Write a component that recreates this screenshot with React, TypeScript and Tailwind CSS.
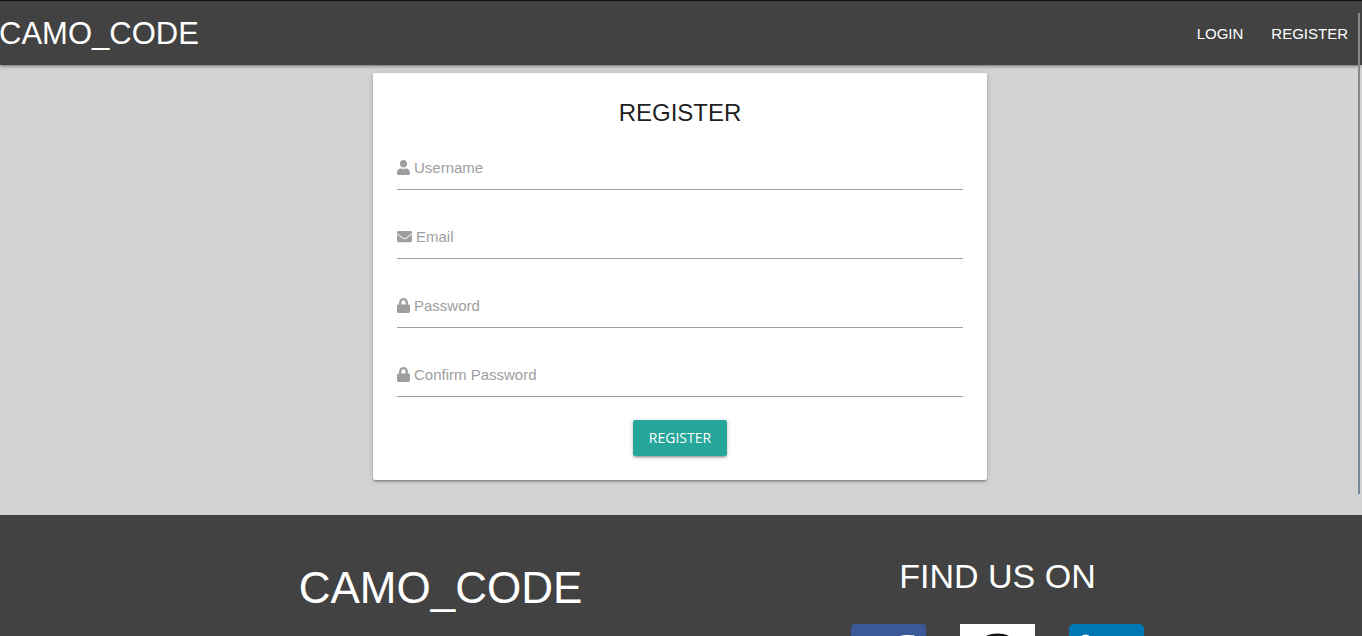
import type { ReactNode } from "react";
import { FaEnvelope, FaLock, FaUser } from "react-icons/fa";

type FieldProps = {
  id: string;
  type: string;
  label: string;
  icon: ReactNode;
};

function Field({ id, type, label, icon }: FieldProps) {
  return (
    <div className="relative">
      <input
        id={id}
        name={id}
        type={type}
        placeholder=" "
        className="peer block h-[45px] w-full border-b border-[#9e9e9e] bg-transparent text-base text-black/85 outline-none focus:border-[#26a69a]"
      />
      <label
        htmlFor={id}
        className="pointer-events-none absolute inset-y-0 left-0 flex items-center gap-1 text-[15px] text-[#9e9e9e] peer-focus:text-[#26a69a]"
      >
        {icon}
        <span className="pt-0.5">{label}</span>
      </label>
    </div>
  );
}

function FacebookLogo() {
  return (
    <svg viewBox="0 0 75 75" className="size-[75px]" aria-hidden="true">
      <rect width="75" height="75" rx="4" fill="#3b5998" />
      <path
        fill="#fff"
        d="M52 75V46h9.700l1.500-11.300H52v-7.200c0-3.300.9-5.500 5.600-5.500h6V11.500c-1-.1-4.600-.4-8.700-.4-8.700 0-14.600 5.300-14.600 15v8.600h-9.800V46h9.800v29H52z"
      />
    </svg>
  );
}

function GithubLogo() {
  return (
    <svg viewBox="0 0 75 75" className="size-[75px]" aria-hidden="true">
      <rect width="75" height="75" fill="#fff" />
      <path
        fill="#111"
        transform="translate(9.500 9.500) scale(3.500)"
        d="M8 0C3.580 0 0 3.580 0 8c0 3.540 2.290 6.530 5.470 7.590.4.070.55-.17.55-.38 0-.19-.01-.82-.01-1.490-2.010.37-2.530-.49-2.690-.94-.09-.23-.48-.94-.82-1.130-.28-.15-.68-.52-.01-.53.63-.01 1.080.58 1.230.82.72 1.210 1.870.87 2.330.66.07-.52.28-.87.51-1.070-1.780-.2-3.640-.89-3.640-3.950 0-.87.31-1.590.82-2.150-.08-.2-.36-1.020.08-2.120 0 0 .67-.21 2.200.82.64-.18 1.320-.27 2-.27s1.360.09 2 .27c1.530-1.040 2.200-.82 2.200-.82.44 1.100.16 1.920.08 2.120.51.56.82 1.270.82 2.150 0 3.070-1.870 3.750-3.650 3.950.29.25.54.73.54 1.480 0 1.070-.01 1.930-.01 2.200 0 .21.15.46.55.38A8.010 8.010 0 0 0 16 8c0-4.420-3.580-8-8-8z"
      />
    </svg>
  );
}

function LinkedinLogo() {
  return (
    <svg viewBox="0 0 75 75" className="size-[75px]" aria-hidden="true">
      <rect width="75" height="75" rx="5" fill="#0077b5" />
      <circle cx="16.500" cy="17" r="6.500" fill="#fff" />
      <path
        fill="#fff"
        d="M11 28h11v36H11zM29 28h10.700v4.900h.2c1.500-2.800 5.100-5.800 10.500-5.800C61.800 27.100 64 34.600 64 44.300V64H52.800V46.500c0-4.200-.1-9.500-5.800-9.500s-6.700 4.500-6.700 9.200V64H29z"
      />
    </svg>
  );
}

export default function App() {
  return (
    <div className="relative flex min-h-screen flex-col bg-[#d3d3d3] font-['Liberation_Sans',Arial,sans-serif] text-black/90">
      <header className="relative border-t border-[#111] bg-[#424242] text-white shadow-[0_2px_2px_0_rgba(0,0,0,0.14),0_3px_1px_-2px_rgba(0,0,0,0.12),0_1px_5px_0_rgba(0,0,0,0.2)]">
        <nav className="flex h-16 items-center justify-between">
          <a href="#home" className="-ml-px text-[31px] leading-none">
            CAMO_CODE
          </a>
          <ul className="flex pt-0.5 text-[15px]">
            <li>
              <a href="#login" className="px-3.5">
                LOGIN
              </a>
            </li>
            <li>
              <a href="#register" className="px-3.5">
                REGISTER
              </a>
            </li>
          </ul>
        </nav>
      </header>

      <main className="pt-2 pr-[18px] pb-[35px] pl-4">
        <section className="mx-auto w-full max-w-[614px] rounded-xs bg-white p-6 shadow-[0_2px_2px_0_rgba(0,0,0,0.14),0_3px_1px_-2px_rgba(0,0,0,0.12),0_1px_5px_0_rgba(0,0,0,0.2)]">
          <h1 className="text-center text-2xl">REGISTER</h1>
          <form className="mt-4" onSubmit={(event) => event.preventDefault()}>
            <div className="flex flex-col gap-6">
              <Field
                id="username"
                type="text"
                label="Username"
                icon={<FaUser className="h-[15px] w-[13px]" preserveAspectRatio="none" />}
              />
              <Field
                id="email"
                type="email"
                label="Email"
                icon={<FaEnvelope className="size-[15px]" />}
              />
              <Field
                id="password"
                type="password"
                label="Password"
                icon={<FaLock className="h-[15px] w-[13px]" preserveAspectRatio="none" />}
              />
              <Field
                id="confirm-password"
                type="password"
                label="Confirm Password"
                icon={<FaLock className="h-[15px] w-[13px]" preserveAspectRatio="none" />}
              />
            </div>
            <div className="mt-[23px] flex justify-center">
              <button
                type="submit"
                className="h-9 rounded-xs bg-[#26a69a] px-4 font-['Open_Sans',sans-serif] text-sm text-white shadow-[0_2px_2px_0_rgba(0,0,0,0.14),0_3px_1px_-2px_rgba(0,0,0,0.12),0_1px_5px_0_rgba(0,0,0,0.2)]"
              >
                REGISTER
              </button>
            </div>
          </form>
        </section>
      </main>

      <footer className="grow bg-[#424242] pt-[41px] pr-[86px] pb-10 pl-[162px] text-white">
        <div className="grid grid-cols-2">
          <h2 className="pt-2 text-center text-[44px] leading-[48px]">CAMO_CODE</h2>
          <div className="flex flex-col items-center">
            <h3 className="text-[34px] leading-[40px]">FIND US ON</h3>
            <div className="mt-7 flex gap-[34px]">
              <a href="#facebook" aria-label="Facebook">
                <FacebookLogo />
              </a>
              <a href="#github" aria-label="GitHub">
                <GithubLogo />
              </a>
              <a href="#linkedin" aria-label="LinkedIn">
                <LinkedinLogo />
              </a>
            </div>
          </div>
        </div>
      </footer>

      <div className="absolute top-[13px] right-0.5 flex h-[481px] w-0.5 flex-col" aria-hidden="true">
        <div className="h-[263px] bg-[#878787]" />
        <div className="grow bg-[#778899]" />
      </div>
    </div>
  );
}
